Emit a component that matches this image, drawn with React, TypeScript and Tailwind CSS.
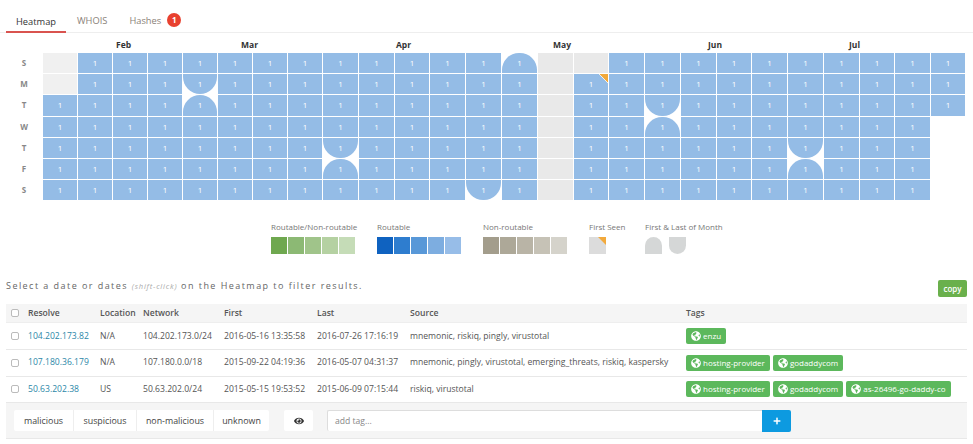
import React from "react";
import { FaEye, FaGlobeAmericas, FaPlus } from "react-icons/fa";

const COLS = "35px 35px 35px 35px 35px 35px 35px 35px 36px 36px 35px 36px 36px 36px 36px 35px 36px 36px 36px 35px 36px 36px 36px 35px 36px 35px";
const DAYS = ["S", "M", "T", "W", "T", "F", "S"];
const MONTHS = [
  { name: "Feb", col: "col-start-3 col-end-6 pl-[3px]" },
  { name: "Mar", col: "col-start-6 col-end-11 pl-[23px]" },
  { name: "Apr", col: "col-start-11 col-end-15 pl-[1px]" },
  { name: "May", col: "col-start-15 col-end-19 pl-[15px]" },
  { name: "Jun", col: "col-start-19 col-end-23 pl-[27px]" },
  { name: "Jul", col: "col-start-23 col-end-27 pl-[25px]" },
];

const roundTop = ["13-0", "4-2", "8-5", "17-3", "21-5"];
const roundBottom = ["4-1", "8-4", "12-6", "17-2", "21-4"];

const Cell = ({ c, r }: { c: number; r: number }) => {
  const key = `${c}-${r}`;
  if (c === 25 && r > 2) return <div />;
  if (c === 14 || key === "15-0") return <div className="bg-[#e9e9e9]" />;
  if (c === 0 && r < 2) return <div className="bg-[#f0f0f0]" />;
  let shape = "";
  if (roundTop.includes(key)) shape = "rounded-t-[17px]";
  if (roundBottom.includes(key)) shape = "rounded-b-[17px]";
  return (
    <div className={`relative flex items-center justify-center bg-[#94bce6] text-[8px] text-white ${shape}`}>
      1
      {key === "15-1" && (
        <svg className="absolute top-0 right-0" width="9" height="9" viewBox="0 0 9 9">
          <path d="M0 0H9V9Z" fill="#f2a93b" />
          <path d="M0 0L9 9" stroke="#fff" strokeWidth="0.8" />
        </svg>
      )}
    </div>
  );
};

const Legend = ({ title, colors, width }: { title: string; colors: string[]; width: string }) => (
  <div className={width}>
    <div className="text-[8px] leading-[12px] text-[#777]">{title}</div>
    <div className="mt-[4px] flex gap-px">
      {colors.map((color) => (
        <div key={color} className="h-[17px] w-4" style={{ backgroundColor: color }} />
      ))}
    </div>
  </div>
);

const Tag = ({ label }: { label: string }) => (
  <span className="inline-flex h-4 items-center gap-[2px] rounded-[2px] bg-[#5cb85c] px-[5px] text-[8px] whitespace-nowrap text-white">
    <FaGlobeAmericas className="text-[10px]" />
    {label}
  </span>
);

const Check = () => <span className="block h-2 w-2 rounded-[2px] border border-[#bbb] bg-white" />;

const ROWS = [
  {
    ip: "104.202.173.82",
    location: "N/A",
    network: "104.202.173.0/24",
    first: "2016-05-16 13:35:58",
    last: "2016-07-26 17:16:19",
    source: "mnemonic, riskiq, pingly, virustotal",
    tags: ["enzu"],
  },
  {
    ip: "107.180.36.179",
    location: "N/A",
    network: "107.180.0.0/18",
    first: "2015-09-22 04:19:36",
    last: "2016-05-07 04:31:37",
    source: "mnemonic, pingly, virustotal, emerging_threats, riskiq, kaspersky",
    tags: ["hosting-provider", "godaddycom"],
  },
  {
    ip: "50.63.202.38",
    location: "US",
    network: "50.63.202.0/24",
    first: "2015-05-15 19:53:52",
    last: "2015-06-09 07:15:44",
    source: "riskiq, virustotal",
    tags: ["hosting-provider", "godaddycom", "as-26496-go-daddy-co"],
  },
];

const TableCols = "grid grid-cols-[22px_72px_43px_81px_93px_93px_276px_1fr] items-center";

export default function App() {
  return (
    <div className="h-[444px] w-[973px] overflow-hidden bg-white font-['Open_Sans','Noto_Sans',sans-serif] text-[#555]">
      <div className="flex h-[33px] items-end border-b border-[#eee] pl-[6px] text-[9.3px]">
        <div className="-mb-px flex h-[26px] w-[60px] justify-center border-b-2 border-[#d9534f] pt-[8px] text-[#333]">Heatmap</div>
        <div className="ml-[11px] flex h-[26px] pt-[8px] text-[#8a8178]">WHOIS</div>
        <div className="ml-[22px] flex h-[26px] gap-[6px] pt-[8px] text-[#8a8178]">
          Hashes
          <span className="-mt-[1px] flex h-[14px] w-[14px] items-center justify-center rounded-full bg-[#e8412f] text-[8px] font-bold text-white">1</span>
        </div>
      </div>

      <div className="pt-[5px] pl-[43px]">
        <div className="grid h-[14px]" style={{ gridTemplateColumns: COLS }}>
          {MONTHS.map((m) => (
            <div key={m.name} className={`${m.col} text-[8.5px] leading-[14px] font-bold text-[#333]`}>{m.name}</div>
          ))}
        </div>
        <div className="relative mt-px grid grid-flow-col grid-rows-[repeat(7,20.2px)] gap-y-px" style={{ gridTemplateColumns: COLS }}>
          {Array.from({ length: 26 }).flatMap((_, c) =>
            DAYS.map((_d, r) => (
              <div key={`${c}-${r}`} className="grid pr-px">
                <Cell c={c} r={r} />
              </div>
            )),
          )}
          {DAYS.map((d, r) => (
            <div
              key={r}
              className="absolute left-[-27px] w-[16px] text-center text-[8px] leading-[20px] font-bold text-[#888]"
              style={{ top: r * 21.2 }}
            >
              {d}
            </div>
          ))}
        </div>
      </div>

      <div className="mt-[21px] flex pl-[271px]">
        <Legend title="Routable/Non-routable" width="w-[106px]" colors={["#6fa84f", "#8cb974", "#a0c48a", "#b5d1a2", "#c5dcb7"]} />
        <Legend title="Routable" width="w-[106px]" colors={["#0f62c0", "#2e7dcf", "#5898d8", "#7dade0", "#97bde8"]} />
        <Legend title="Non-routable" width="w-[106px]" colors={["#a39d8c", "#ada898", "#b9b4a6", "#c6c2b6", "#d5d3cb"]} />
        <div className="w-[56px]">
          <div className="text-[8px] leading-[12px] text-[#777]">First Seen</div>
          <div className="relative mt-[4px] h-[17px] w-[17px] bg-[#dcdcdc]">
            <svg className="absolute top-0 right-0" width="8" height="8" viewBox="0 0 8 8">
              <path d="M0 0H8V8Z" fill="#f2a93b" />
            </svg>
          </div>
        </div>
        <div>
          <div className="text-[8px] leading-[12px] text-[#777]">First &amp; Last of Month</div>
          <div className="mt-[4px] flex gap-[7px]">
            <div className="h-[17px] w-[17px] rounded-t-[9px] bg-[#d5d7d7]" />
            <div className="h-[17px] w-[17px] rounded-b-[9px] bg-[#d5d7d7]" />
          </div>
        </div>
      </div>

      <div className="flex items-start justify-between pr-[6px] pl-[6px]">
        <div className="mt-[25px] text-[9px] leading-[14px] tracking-[1.45px] text-[#666]">
          Select a date or dates <em className="text-[7.5px] tracking-[0.8px] text-[#aaa]">(shift-click)</em> on the Heatmap to filter results.
        </div>
        <button className="mt-[26px] h-[17px] w-[29px] rounded-[2px] bg-[#6ab04c] text-[8px] font-semibold text-white">copy</button>
      </div>

      <div className="mx-[6px] mt-[7px] w-[961px] text-[8.6px]">
        <div className={`${TableCols} h-[19px] border-b border-[#eee] bg-[#f5f5f5] font-semibold text-[#555]`}>
          <div className="pl-[5px]"><Check /></div>
          <div>Resolve</div>
          <div>Location</div>
          <div>Network</div>
          <div>First</div>
          <div>Last</div>
          <div>Source</div>
          <div>Tags</div>
        </div>
        {ROWS.map((row) => (
          <div key={row.ip} className={`${TableCols} h-[26.6px] border-b border-[#e8e8e8]`}>
            <div className="pl-[5px]"><Check /></div>
            <div className="text-[#2c87a8]">{row.ip}</div>
            <div>{row.location}</div>
            <div>{row.network}</div>
            <div>{row.first}</div>
            <div>{row.last}</div>
            <div>{row.source}</div>
            <div className="flex gap-[3px]">
              {row.tags.map((tag) => <Tag key={tag} label={tag} />)}
            </div>
          </div>
        ))}
        <div className="flex h-[36px] items-center border-b border-[#e8e8e8] bg-[#f5f5f5] pl-[8px] text-[8.9px]">
          <div className="flex h-[21px] items-center rounded-[2px] bg-white text-[#444]">
            <span className="flex h-full w-[59px] items-center justify-center">malicious</span>
            <span className="flex h-full w-[63px] items-center justify-center border-l border-[#eee]">suspicious</span>
            <span className="flex h-full w-[77px] items-center justify-center border-l border-[#eee]">non-malicious</span>
            <span className="flex h-full w-[56px] items-center justify-center border-l border-[#eee]">unknown</span>
          </div>
          <div className="ml-[15px] flex h-[21px] w-[29px] items-center justify-center rounded-[2px] bg-white">
            <FaEye className="text-[10px] text-[#333]" />
          </div>
          <div className="ml-[14px] flex h-[21px] w-[435px] items-center rounded-l-[2px] border-t border-l border-[#ddd] bg-white pl-[7px] text-[8.6px] text-[#888]">add tag...</div>
          <div className="flex h-[22px] w-[29px] items-center justify-center rounded-r-[2px] bg-[#0d9ae0]">
            <FaPlus className="text-[8px] text-white" />
          </div>
        </div>
      </div>
    </div>
  );
}
